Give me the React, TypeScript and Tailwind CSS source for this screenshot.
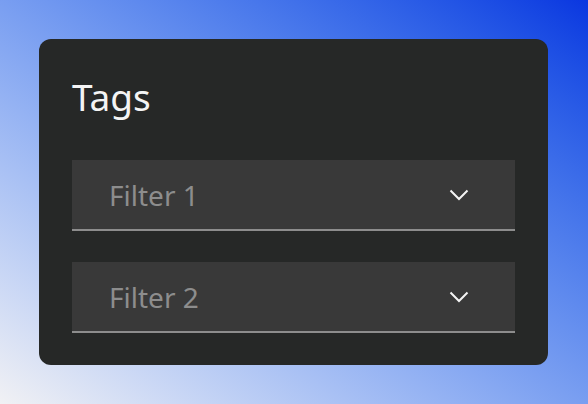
function Chevron() {
    return (
        <svg width="20" height="12" viewBox="0 0 20 12" fill="none" className="text-[#f4f4f4]">
            <polyline points="1.5,1.5 10,10 18.5,1.5" stroke="currentColor" strokeWidth="2" />
        </svg>
    );
}

function Filter({ label }: { label: string }) {
    return (
        <div className="flex items-center justify-between h-[71px] bg-[#393939] border-b-2 border-[#8d8d8d] pl-[37px] pr-[46px]">
            <span className="text-[28px] text-[#8d8d8d] leading-none">{label}</span>
            <Chevron />
        </div>
    );
}

export default function App() {
    return (
        <div
            className="w-[588px] h-[404px] bg-gradient-to-tr from-[#f1f1f4] to-[#0b36e0] p-[39px] pr-[40px]"
            style={{ fontFamily: '"Noto Sans", sans-serif' }}>
            <div className="h-[326px] rounded-[12px] bg-[#262827] px-[33px] pt-[76px]">
                <h1 className="text-[37px] leading-none text-[#f4f4f4] -mt-[37px] mb-[45px]">Tags</h1>
                <div className="flex flex-col gap-[31px]">
                    <Filter label="Filter 1" />
                    <Filter label="Filter 2" />
                </div>
            </div>
        </div>
    );
}
